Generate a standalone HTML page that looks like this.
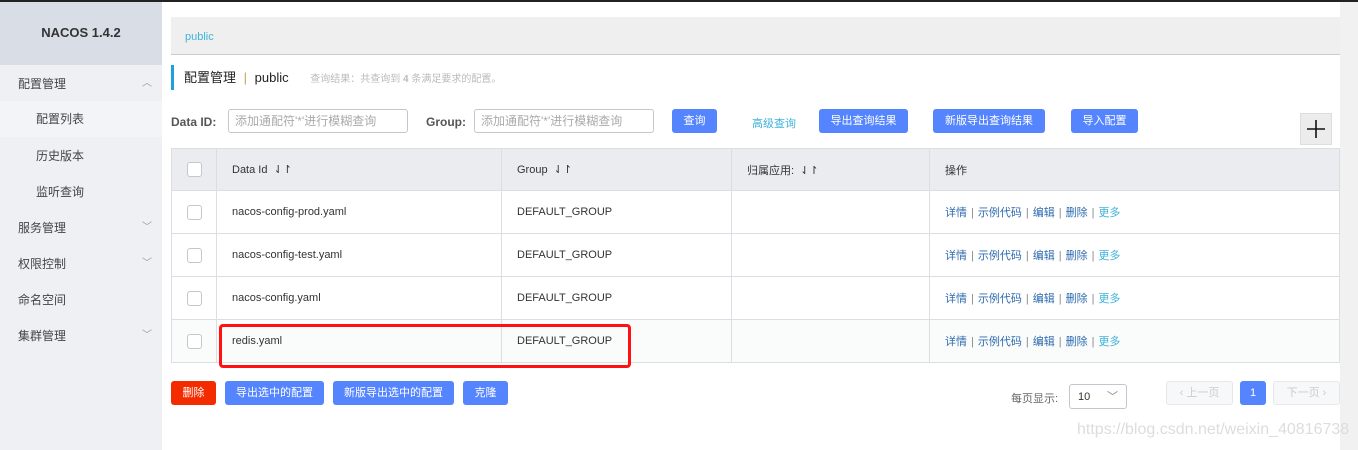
<!DOCTYPE html>
<html><head><meta charset="utf-8"><style>
*{box-sizing:border-box;margin:0;padding:0}
body{width:1358px;height:450px;overflow:hidden;background:#fff;font-family:"Liberation Sans","Noto Sans CJK SC",sans-serif;font-size:12px;color:#333;position:relative}
.abs{position:absolute}
.top{left:0;top:0;width:1358px;height:2px;background:#222}
.side{left:0;top:2px;width:162px;height:448px;background:#eef0f4}
.logo{left:0;top:2px;width:162px;height:63px;background:#d9dde5;text-align:center;line-height:62px;font-weight:bold;font-size:13px;color:#333}
.mi{left:0;width:162px;height:36px;line-height:36px;font-size:12px;color:#444}
.mi.l1{padding-left:18px}
.mi.l2{padding-left:36px}
.arr{position:absolute;right:10px;top:0;color:#999;font-size:10px}
.scroll{left:1340px;top:2px;width:18px;height:448px;background:#f1f1f1}
.bc{left:171px;top:17px;width:1169px;height:38px;background:#efefef;border-bottom:1px solid #ccc;padding-left:14px;line-height:40px;color:#3fb3d9;font-size:11px}
.title{left:171px;top:65px;height:25px;border-left:3px solid #1ea0d9;padding-left:10px;line-height:25px;font-size:13px;color:#222}
.input{height:24px;border:1px solid #c4c6cf;border-radius:3px;padding-left:6px;line-height:22px;color:#aaa;font-size:12px}
.btn{height:24px;background:#5584ff;color:#fff;border-radius:3px;text-align:center;line-height:24px;font-size:11px}
table{border-collapse:collapse;position:absolute;left:171px;top:148px;width:1169px}
td{border:1px solid #dcdee3;height:43px;padding-left:15px;font-size:11px;color:#333}
tr.h td{background:#ebecf0;height:42px}
tr.r td{background:#fff}
tr.r4 td{background:#fafbfb}
.cb{display:inline-block;width:15px;height:15px;border:1px solid #c4c6cf;border-radius:3px;background:#fff;vertical-align:middle}
.ops{color:#2e6bb0}
.ops i{font-style:normal;color:#888;margin:0 4px}
.ops b{font-weight:normal;color:#3fb3d9}
</style></head><body>
<div class="abs top"></div>
<div class="abs side"></div>
<div class="abs logo">NACOS 1.4.2</div>
<div class="abs mi l1" style="top:66px">配置管理<span class="arr">︿</span></div>
<div class="abs mi l2" style="top:101px;background:#f3f4f7">配置列表</div>
<div class="abs mi l2" style="top:138px">历史版本</div>
<div class="abs mi l2" style="top:174px">监听查询</div>
<div class="abs mi l1" style="top:210px">服务管理<span class="arr">﹀</span></div>
<div class="abs mi l1" style="top:246px">权限控制<span class="arr">﹀</span></div>
<div class="abs mi l1" style="top:282px">命名空间</div>
<div class="abs mi l1" style="top:318px">集群管理<span class="arr">﹀</span></div>
<div class="abs scroll"></div>
<div class="abs bc">public</div>
<div class="abs title">配置管理 <span style="color:#c8a060;margin:0 4px">|</span> public <span style="color:#bbb;font-size:10px;margin-left:18px">查询结果：共查询到 <b>4</b> 条满足要求的配置。</span></div>
<div class="abs" style="left:171px;top:115px;font-weight:bold;font-size:12px;color:#555">Data ID:</div>
<div class="abs input" style="left:228px;top:109px;width:180px">添加通配符'*'进行模糊查询</div>
<div class="abs" style="left:426px;top:115px;font-weight:bold;font-size:12px;color:#555">Group:</div>
<div class="abs input" style="left:474px;top:109px;width:180px">添加通配符'*'进行模糊查询</div>
<div class="abs btn" style="left:672px;top:109px;width:45px">查询</div>
<div class="abs" style="left:752px;top:115px;color:#3fb3d9;font-size:11px">高级查询</div>
<div class="abs btn" style="left:819px;top:109px;width:89px">导出查询结果</div>
<div class="abs btn" style="left:933px;top:109px;width:112px">新版导出查询结果</div>
<div class="abs btn" style="left:1071px;top:109px;width:67px">导入配置</div>
<div class="abs" style="left:1300px;top:113px;width:32px;height:32px;background:#ececec;border:1px solid #ddd">
<svg width="30" height="30" viewBox="0 0 30 30"><path d="M15 6V24M6 15H24" stroke="#111" stroke-width="1.6"/></svg></div>
<table>
<tr class="h"><td style="width:45px"><span class="cb"></span></td><td style="width:285px">Data Id &nbsp;⇃↾</td><td style="width:230px">Group &nbsp;⇃↾</td><td style="width:198px">归属应用: &nbsp;⇃↾</td><td>操作</td></tr>
<tr class="r"><td><span class="cb"></span></td><td>nacos-config-prod.yaml</td><td>DEFAULT_GROUP</td><td></td><td class="ops">详情<i>|</i>示例代码<i>|</i>编辑<i>|</i>删除<i>|</i><b>更多</b></td></tr>
<tr class="r"><td><span class="cb"></span></td><td>nacos-config-test.yaml</td><td>DEFAULT_GROUP</td><td></td><td class="ops">详情<i>|</i>示例代码<i>|</i>编辑<i>|</i>删除<i>|</i><b>更多</b></td></tr>
<tr class="r"><td><span class="cb"></span></td><td>nacos-config.yaml</td><td>DEFAULT_GROUP</td><td></td><td class="ops">详情<i>|</i>示例代码<i>|</i>编辑<i>|</i>删除<i>|</i><b>更多</b></td></tr>
<tr class="r4"><td><span class="cb"></span></td><td>redis.yaml</td><td>DEFAULT_GROUP</td><td></td><td class="ops">详情<i>|</i>示例代码<i>|</i>编辑<i>|</i>删除<i>|</i><b>更多</b></td></tr>
</table>
<div class="abs" style="left:219px;top:324px;width:412px;height:44px;border:3px solid #f11;border-radius:4px"></div>
<div class="abs btn" style="left:171px;top:381px;width:45px;background:#f52b00">删除</div>
<div class="abs btn" style="left:225px;top:381px;width:99px">导出选中的配置</div>
<div class="abs btn" style="left:333px;top:381px;width:121px">新版导出选中的配置</div>
<div class="abs btn" style="left:463px;top:381px;width:45px">克隆</div>
<div class="abs" style="left:1011px;top:390px;color:#666;font-size:11px">每页显示:</div>
<div class="abs" style="left:1069px;top:384px;width:58px;height:25px;border:1px solid #c4c6cf;border-radius:3px;padding-left:8px;line-height:24px;font-size:11px">10<span style="position:absolute;right:8px;color:#888">﹀</span></div>
<div class="abs" style="left:1166px;top:381px;width:67px;height:24px;border:1px solid #e6e7eb;background:#f7f8fa;border-radius:3px;text-align:center;line-height:22px;color:#ccc;font-size:11px">‹ 上一页</div>
<div class="abs btn" style="left:1240px;top:381px;width:26px">1</div>
<div class="abs" style="left:1273px;top:381px;width:67px;height:24px;border:1px solid #e6e7eb;background:#f7f8fa;border-radius:3px;text-align:center;line-height:22px;color:#ccc;font-size:11px">下一页 ›</div>
<div class="abs" style="left:1077px;top:421px;color:#ddd;font-size:16px">https://blog.csdn.net/weixin_40816738</div>
</body></html>
